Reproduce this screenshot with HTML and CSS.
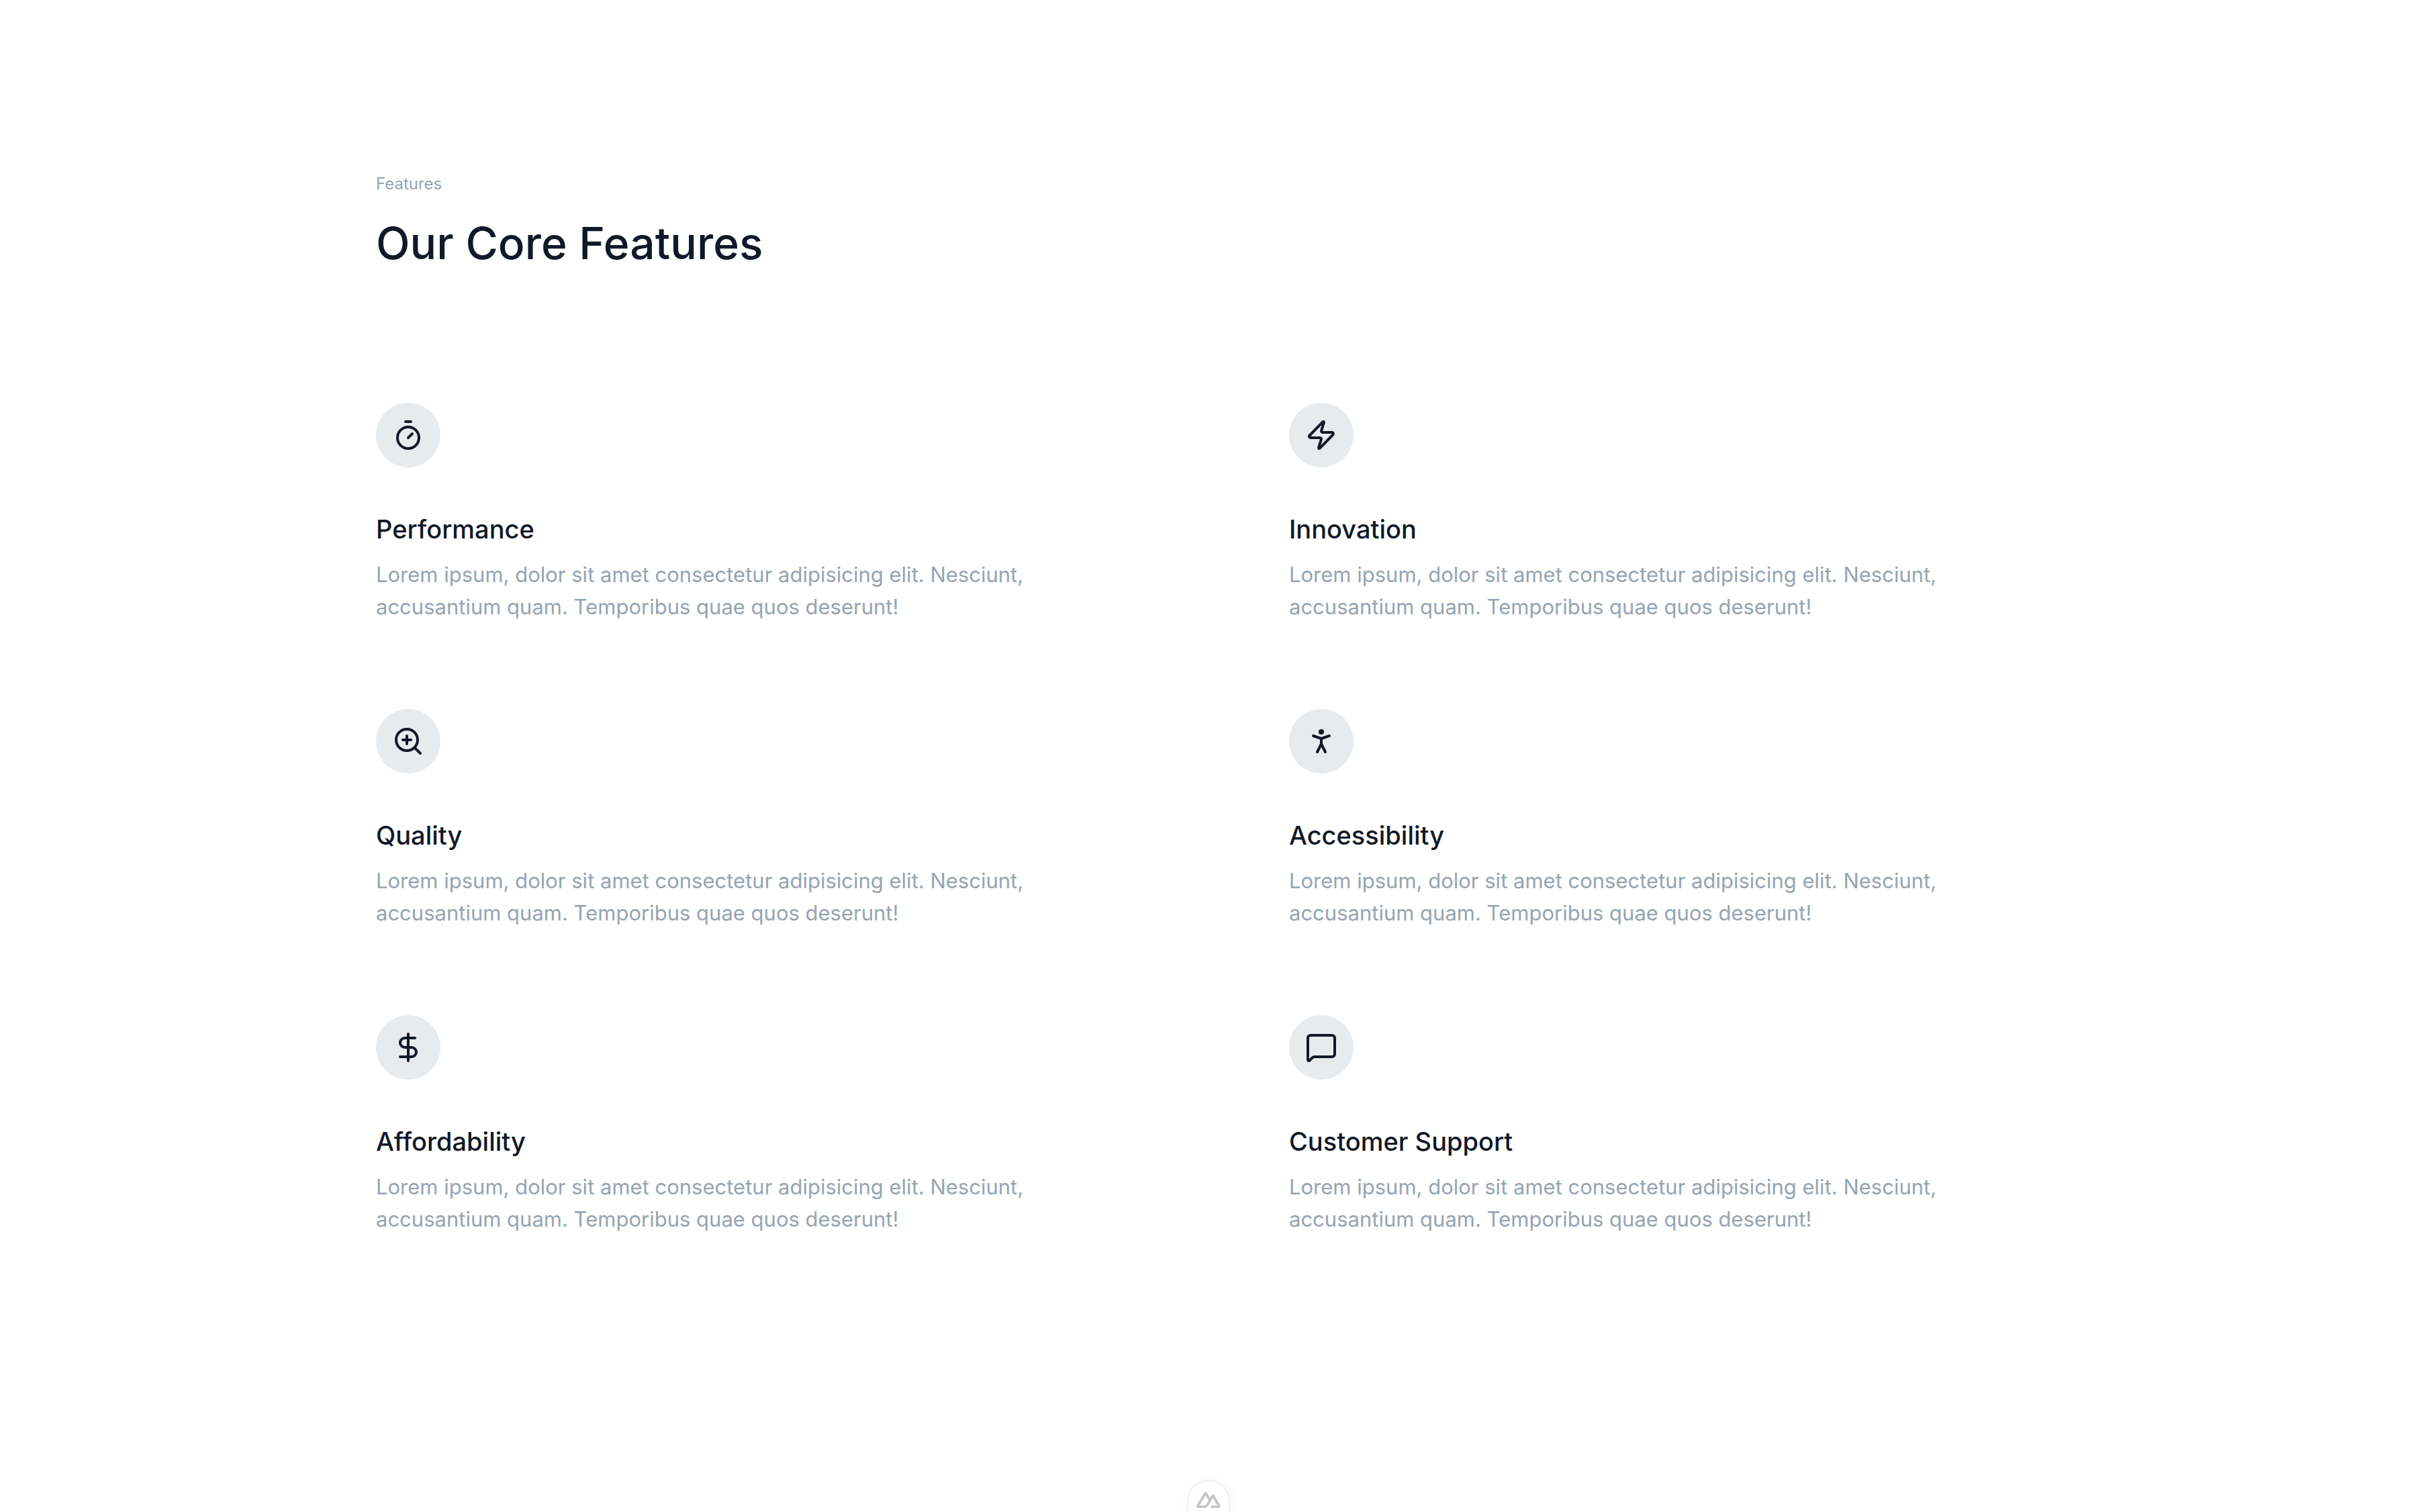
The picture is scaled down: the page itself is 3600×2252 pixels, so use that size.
FILE: index.html
```html
<!DOCTYPE html>
<html lang="en">
<head>
  <meta charset="utf-8">
  <meta name="viewport" content="width=device-width, initial-scale=1">
  <title>Our Core Features</title>
  <link rel="stylesheet" href="styles.css">
</head>
<body>
  <main class="section">
    <header class="section-header">
      <p class="eyebrow">Features</p>
      <h1 class="title">Our Core Features</h1>
    </header>
    <div class="features">
      <article class="feature">
        <span class="feature-icon">
          <svg class="icon" viewBox="0 0 24 24" aria-hidden="true"><path d="M10 2h4M12 14l3-3"/><circle cx="12" cy="14" r="8"/></svg>
        </span>
        <h2 class="feature-title">Performance</h2>
        <p class="feature-text">Lorem ipsum, dolor sit amet consectetur adipisicing elit. Nesciunt, accusantium quam. Temporibus quae quos deserunt!</p>
      </article>
      <article class="feature">
        <span class="feature-icon">
          <svg class="icon" viewBox="0 0 24 24" aria-hidden="true"><path d="M4 14a1 1 0 0 1-.78-1.63l9.9-10.2a.5.5 0 0 1 .86.46l-1.92 6.02A1 1 0 0 0 13 10h7a1 1 0 0 1 .78 1.63l-9.9 10.2a.5.5 0 0 1-.86-.46l1.92-6.02A1 1 0 0 0 11 14z"/></svg>
        </span>
        <h2 class="feature-title">Innovation</h2>
        <p class="feature-text">Lorem ipsum, dolor sit amet consectetur adipisicing elit. Nesciunt, accusantium quam. Temporibus quae quos deserunt!</p>
      </article>
      <article class="feature">
        <span class="feature-icon">
          <svg class="icon" viewBox="0 0 24 24" aria-hidden="true"><circle cx="11" cy="11" r="8"/><path d="M21 21l-4.35-4.35M11 8v6M8 11h6"/></svg>
        </span>
        <h2 class="feature-title">Quality</h2>
        <p class="feature-text">Lorem ipsum, dolor sit amet consectetur adipisicing elit. Nesciunt, accusantium quam. Temporibus quae quos deserunt!</p>
      </article>
      <article class="feature">
        <span class="feature-icon">
          <svg class="icon" viewBox="0 0 24 24" aria-hidden="true"><circle cx="12" cy="5" r="1"/><path d="M9 20l3-6 3 6M6 8l6 2 6-2M12 10v4"/></svg>
        </span>
        <h2 class="feature-title">Accessibility</h2>
        <p class="feature-text">Lorem ipsum, dolor sit amet consectetur adipisicing elit. Nesciunt, accusantium quam. Temporibus quae quos deserunt!</p>
      </article>
      <article class="feature">
        <span class="feature-icon">
          <svg class="icon" viewBox="0 0 24 24" aria-hidden="true"><path d="M12 2v20M17 5H9.5a3.5 3.5 0 0 0 0 7h5a3.5 3.5 0 0 1 0 7H6"/></svg>
        </span>
        <h2 class="feature-title">Affordability</h2>
        <p class="feature-text">Lorem ipsum, dolor sit amet consectetur adipisicing elit. Nesciunt, accusantium quam. Temporibus quae quos deserunt!</p>
      </article>
      <article class="feature">
        <span class="feature-icon">
          <svg class="icon" viewBox="0 0 24 24" aria-hidden="true"><path d="M22 17a2 2 0 0 1-2 2H6.828a2 2 0 0 0-1.414.586l-2.202 2.202A.71.71 0 0 1 2 21.286V5a2 2 0 0 1 2-2h16a2 2 0 0 1 2 2z"/></svg>
        </span>
        <h2 class="feature-title">Customer Support</h2>
        <p class="feature-text">Lorem ipsum, dolor sit amet consectetur adipisicing elit. Nesciunt, accusantium quam. Temporibus quae quos deserunt!</p>
      </article>
    </div>
  </main>
  <button class="devtools" type="button" aria-label="Toggle Nuxt DevTools">
    <svg class="devtools-logo" viewBox="0 0 324 324" aria-hidden="true"><path d="M181.767 270H302.211C306.037 270 309.795 269.003 313.108 267.107C316.421 265.211 319.172 262.484 321.084 259.2C322.996 255.915 324.002 252.19 324 248.399C323.998 244.607 322.989 240.883 321.074 237.601L240.187 98.7439C238.275 95.4607 235.525 92.7342 232.213 90.8385C228.901 88.9429 225.143 87.9449 221.318 87.9449C217.494 87.9449 213.736 88.9429 210.424 90.8385C207.112 92.7342 204.361 95.4607 202.449 98.7439L181.767 134.272L141.329 64.7975C139.416 61.5145 136.664 58.7884 133.351 56.8931C130.038 54.9978 126.28 54 122.454 54C118.629 54 114.871 54.9978 111.558 56.8931C108.245 58.7884 105.493 61.5145 103.58 64.7975L2.92554 237.601C1.01067 240.883 0 244.607 0 248.399C0 252.19 1.00407 255.915 2.91605 259.2C4.82803 262.484 7.57884 265.211 10.8918 267.107C14.2047 269.003 17.963 270 21.7886 270H97.3936C127.349 270 149.44 256.959 164.641 231.517L201.546 168.172L221.313 134.272L280.637 236.1H201.546L181.767 270ZM96.1611 236.065L43.3984 236.054L122.49 100.291L161.953 168.172L135.531 213.543C125.436 230.051 113.968 236.065 96.1611 236.065Z"/></svg>
  </button>
</body>
</html>
```

FILE: styles.css
```css
* {
  box-sizing: border-box;
}

body {
  margin: 0;
  background: #ffffff;
  color: #111827;
  font-family: Inter, "Liberation Sans", sans-serif;
}

h1,
h2,
p {
  margin: 0;
}

.section {
  max-width: 2560px;
  margin: 0 auto;
  padding: 256px 40px;
}

.section-header {
  display: flex;
  flex-direction: column;
  gap: 28px;
  margin-bottom: 196px;
}

.eyebrow {
  color: #96a4b1;
  font-size: 24px;
  line-height: 36px;
}

.title {
  font-size: 66px;
  font-weight: 500;
  line-height: 84px;
}

.features {
  display: grid;
  grid-template-columns: repeat(2, 1fr);
  gap: 128px 240px;
}

.feature-icon {
  display: flex;
  align-items: center;
  justify-content: center;
  width: 96px;
  height: 96px;
  margin-bottom: 64px;
  border-radius: 50%;
  background: #e7ebee;
}

.icon {
  width: 48px;
  height: 48px;
  fill: none;
  stroke: currentColor;
  stroke-width: 2;
  stroke-linecap: round;
  stroke-linejoin: round;
}

.feature-title {
  margin-bottom: 16px;
  font-size: 38px;
  font-weight: 500;
  line-height: 56px;
}

.feature-text {
  color: #96a4b1;
  font-size: 31px;
  line-height: 48px;
}

.devtools {
  position: fixed;
  bottom: 0;
  left: 50%;
  width: 64px;
  height: 48px;
  padding: 10px 0 0;
  transform: translateX(-50%);
  border: 2px solid #f0f0f0;
  border-bottom: 0;
  border-radius: 32px 32px 0 0;
  background: #ffffff;
  box-shadow: 4px 4px 20px rgba(0, 0, 0, 0.04);
}

.devtools-logo {
  display: block;
  width: 36px;
  height: 36px;
  margin: 0 auto;
  fill: #c6c6c6;
}
```
